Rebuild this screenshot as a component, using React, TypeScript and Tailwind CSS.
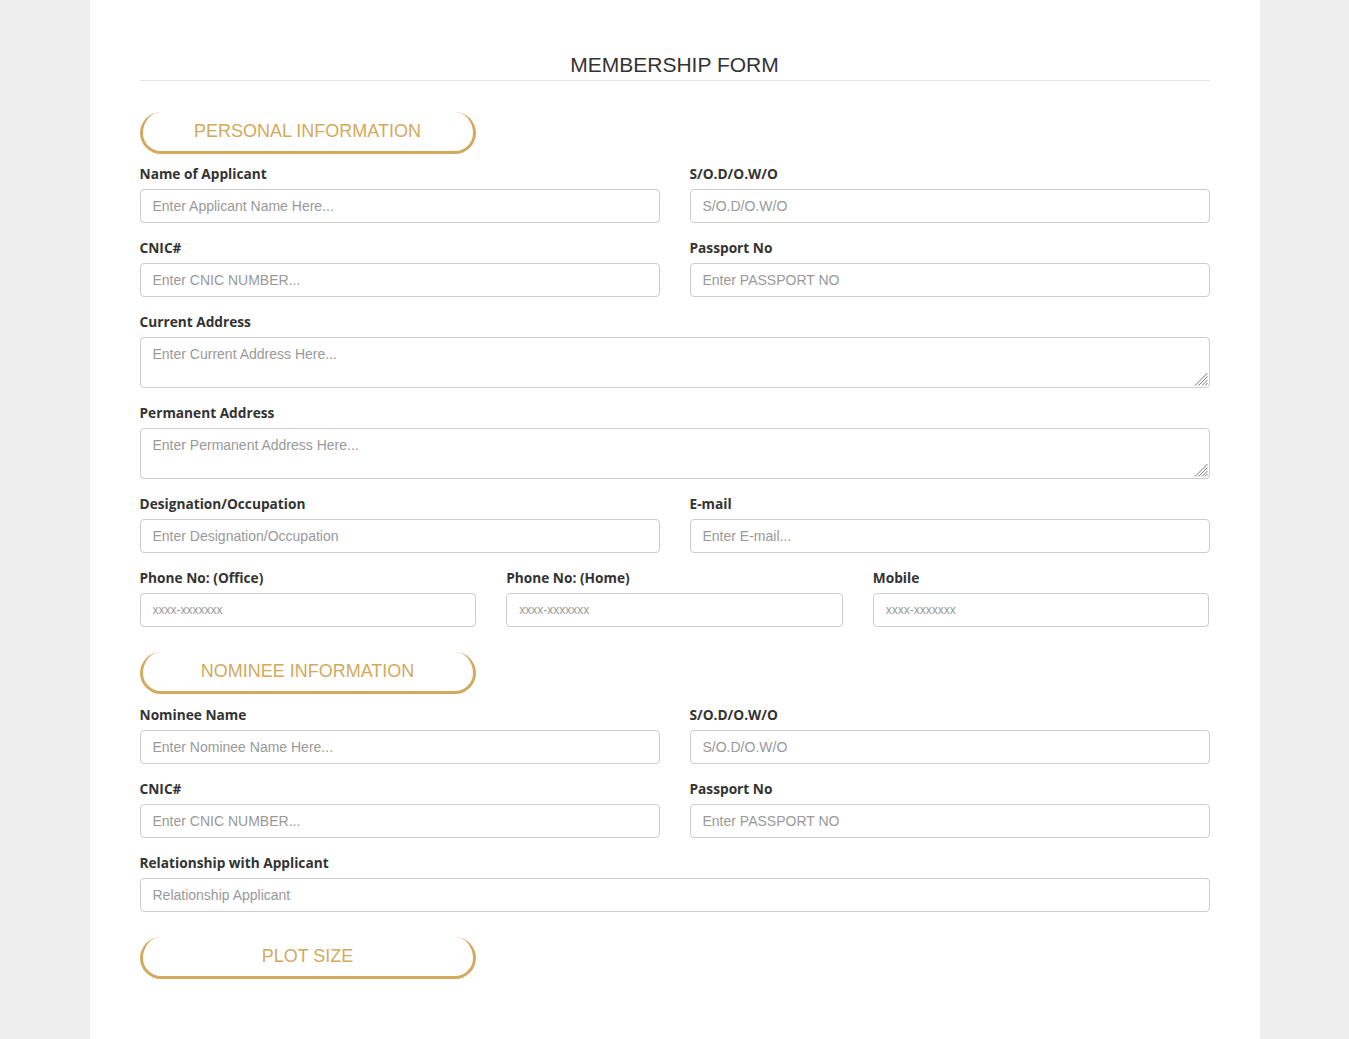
type Field = { label: string; placeholder: string; small?: boolean };

function Heading({ children }: { children: string }) {
  return (
    <div className="w-[336px] h-[42px] mb-[10px] flex items-center justify-center rounded-[22px] border-[3px] border-t-0 border-[#d3a95e] text-[18px] text-[#d3a95e] font-['Liberation_Sans',Arial,sans-serif]">
      {children}
    </div>
  );
}

function Label({ children }: { children: string }) {
  return (
    <label className="block h-5 leading-5 mb-[5px] text-[13.7px] font-bold text-[#333] font-['Open_Sans',sans-serif]">
      {children}
    </label>
  );
}

function Input({ label, placeholder, small }: Field) {
  return (
    <div className="pb-[15px]">
      <Label>{label}</Label>
      <input
        placeholder={placeholder}
        className={
          "w-full h-[34px] px-3 rounded border border-[#ccc] outline-none font-['Liberation_Sans',Arial,sans-serif] placeholder:text-[#999] " +
          (small ? "text-[12px]" : "text-[14px]")
        }
      />
    </div>
  );
}

function Area({ label, placeholder }: Field) {
  return (
    <div className="pb-[15px]">
      <Label>{label}</Label>
      <div className="relative">
        <textarea
          placeholder={placeholder}
          className="block w-full h-[51px] px-3 py-[6px] resize-none rounded border border-[#ccc] outline-none text-[14px] font-['Liberation_Sans',Arial,sans-serif] placeholder:text-[#999]"
        />
        <svg className="absolute right-[2px] bottom-[2px]" width="14" height="14" viewBox="0 0 14 14">
          <g stroke="#777" strokeWidth="1">
            <line x1="13.5" y1="1" x2="1" y2="13.5" />
            <line x1="13.5" y1="4.5" x2="4.5" y2="13.5" />
            <line x1="13.5" y1="8" x2="8" y2="13.5" />
            <line x1="13.5" y1="11" x2="11" y2="13.5" />
          </g>
        </svg>
      </div>
    </div>
  );
}

export default function App() {
  return (
    <div className="min-h-[1039px] bg-[#eee]">
      <div className="mx-auto w-[1170px] min-h-[1039px] bg-white px-[50px] pt-[53px]">
        <h1 className="text-center text-[21px] leading-6 text-[#333] font-['Liberation_Sans',Arial,sans-serif] pb-[3px] border-b border-[#e5e5e5]">
          MEMBERSHIP FORM
        </h1>
        <div className="pt-[31px]">
          <Heading>PERSONAL INFORMATION</Heading>
          <div className="grid grid-cols-2 gap-x-[30px]">
            <Input label="Name of Applicant" placeholder="Enter Applicant Name Here..." />
            <Input label="S/O.D/O.W/O" placeholder="S/O.D/O.W/O" />
            <Input label="CNIC#" placeholder="Enter CNIC NUMBER..." />
            <Input label="Passport No" placeholder="Enter PASSPORT NO" />
          </div>
          <Area label="Current Address" placeholder="Enter Current Address Here..." />
          <Area label="Permanent Address" placeholder="Enter Permanent Address Here..." />
          <div className="grid grid-cols-2 gap-x-[30px]">
            <Input label="Designation/Occupation" placeholder="Enter Designation/Occupation" />
            <Input label="E-mail" placeholder="Enter E-mail..." />
          </div>
          <div className="grid grid-cols-3 gap-x-[30px]">
            <Input label="Phone No: (Office)" placeholder="xxxx-xxxxxxx" small />
            <Input label="Phone No: (Home)" placeholder="xxxx-xxxxxxx" small />
            <Input label="Mobile" placeholder="xxxx-xxxxxxx" small />
          </div>
        </div>
        <div className="pt-[10px]">
          <Heading>NOMINEE INFORMATION</Heading>
          <div className="pt-px grid grid-cols-2 gap-x-[30px]">
            <Input label="Nominee Name" placeholder="Enter Nominee Name Here..." />
            <Input label="S/O.D/O.W/O" placeholder="S/O.D/O.W/O" />
            <Input label="CNIC#" placeholder="Enter CNIC NUMBER..." />
            <Input label="Passport No" placeholder="Enter PASSPORT NO" />
          </div>
          <Input label="Relationship with Applicant" placeholder="Relationship Applicant" />
        </div>
        <div className="pt-[10px]">
          <Heading>PLOT SIZE</Heading>
        </div>
      </div>
    </div>
  );
}
